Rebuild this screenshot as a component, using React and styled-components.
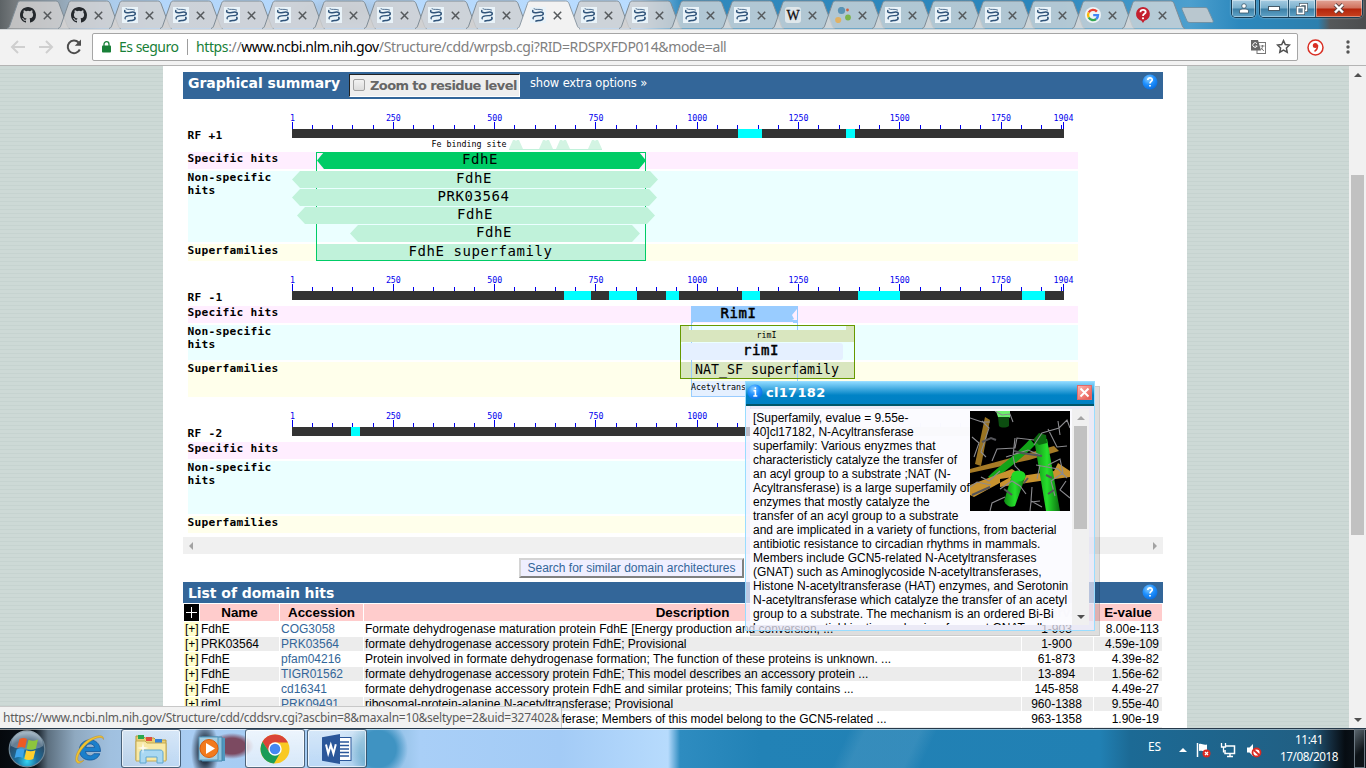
import React from "react";
import styled, { createGlobalStyle } from "styled-components";

const Global = createGlobalStyle`
  * { box-sizing: border-box; }
  html, body { margin: 0; padding: 0; }
  body { width: 1366px; height: 768px; overflow: hidden; font-family: "Liberation Sans", Arial, sans-serif; font-size: 12px; color: #000; }
  svg { display: block; }
`;

const UI = `"Noto Sans", "Open Sans", sans-serif`;
const VERDANA = `"DejaVu Sans", Verdana, sans-serif`;

const Desktop = styled.div`
  width: 1366px; height: 768px; display: flex; flex-direction: column; overflow: hidden;
`;

/* ---------- tab strip ---------- */
const TabStrip = styled.div`
  height: 29px; flex: none; position: relative; display: flex; padding-left: 7px;
  background:
    radial-gradient(ellipse 60px 16px at 345px 10px, rgba(120,130,140,.35), transparent),
    linear-gradient(90deg, #5d6366 0, #74797c 14px, #93a5b4 60px, #a9c8e6 100px, #b3d6fa 150px, #b9dcff 640px, #6fb0dc 662px, #3089bd 682px, #2a86bc 1030px, #4c9fce 1190px, #2c88bd 1240px, #2c7fae 1318px, #55585a 1330px, #4b4d4f 1366px);
`;
const TabBox = styled.div`
  width: ${p => (p.$narrow ? 50 : 51)}px; height: 29px; flex: none; position: relative; z-index: ${p => (p.$active ? 5 : 1)};
`;
const TabShape = styled.svg`position: absolute; left: 0; top: 0; overflow: visible;`;
const TabContent = styled.div`
  position: relative; display: flex; align-items: center; gap: 7px; padding: 7px 0 0 13px;
`;
const NewTab = styled.svg`margin: 7px 0 0 9px; flex: none; overflow: visible;`;
const WindowButtons = styled.div`
  position: absolute; right: 3px; top: 0; display: flex; align-items: flex-start; gap: 3px;
`;
const ButtonGroup = styled.div`
  display: flex; height: 18px; border: 1px solid #173b52; border-top: 0; border-radius: 0 0 5px 5px;
  box-shadow: inset 0 0 0 1px rgba(255,255,255,.55), 0 0 2px rgba(255,255,255,.6); overflow: hidden;
`;
const WinButton = styled.div`
  width: ${p => p.$w}px; height: 17px; display: flex; align-items: center; justify-content: center;
  border-left: ${p => (p.$sep ? "1px solid #24506b" : "0")};
  background: ${p => p.$red
    ? "linear-gradient(#e2a497 0,#d0705c 48%,#b3240c 52%,#c8421f 100%)"
    : "linear-gradient(#a5cce2 0,#78aecb 48%,#3d7fa5 52%,#5fa3c8 100%)"};
  box-shadow: inset 0 0 0 1px rgba(255,255,255,.4);
`;

const Ncbi = () => (
  <svg width="16" height="16" viewBox="0 0 16 16">
    <rect width="16" height="16" fill="#e9f3f9" />
    <g fill="none" stroke="#2f5379" strokeLinecap="round">
      <path d="M2.800 3.400C2 6 5 6 8 5.400s5.600-.4 5.200 1.400" strokeWidth="1.500" />
      <path d="M4 1.800C6 3.400 9 1.400 12.600 3" strokeWidth=".8" />
      <path d="M13.200 7.200C12.500 9.300 9 8.200 6.200 8.800S2.600 10.600 3.200 11.800" strokeWidth="1.300" />
      <path d="M12.800 10.400c.8 1.400-.4 2.400-2 2.800-1.600.4-3.200.2-4.800.8" strokeWidth="1.700" />
    </g>
  </svg>
);
const GitHub = () => (
  <svg width="16" height="16" viewBox="0 0 16 16">
    <path fill="#24282c" d="M8 0C3.580 0 0 3.580 0 8c0 3.540 2.290 6.530 5.470 7.590.4.070.55-.17.55-.38 0-.19-.01-.82-.01-1.490-2.010.37-2.530-.49-2.690-.94-.09-.23-.48-.94-.82-1.130-.28-.15-.68-.52-.01-.53.63-.01 1.080.58 1.230.82.72 1.210 1.870.87 2.330.66.070-.52.28-.87.51-1.070-1.780-.2-3.640-.89-3.640-3.950 0-.87.31-1.590.82-2.150-.08-.2-.36-1.020.08-2.120 0 0 .67-.21 2.200.82a7.600 7.600 0 0 1 4 0c1.530-1.040 2.200-.82 2.200-.82.44 1.100.16 1.920.08 2.120.51.56.82 1.270.82 2.150 0 3.070-1.870 3.750-3.650 3.950.29.25.54.73.54 1.480 0 1.070-.01 1.930-.01 2.200 0 .21.15.46.55.38A8.010 8.010 0 0 0 16 8c0-4.420-3.580-8-8-8z" />
  </svg>
);
const Wiki = () => (
  <svg width="16" height="16" viewBox="0 0 16 16">
    <rect width="16" height="16" rx="3" fill="#dfe7eb" />
    <text x="8" y="12.500" textAnchor="middle" fontFamily="Liberation Serif, serif" fontSize="14" fill="#111" stroke="#111" strokeWidth=".3">W</text>
  </svg>
);
const Dots = () => (
  <svg width="16" height="16" viewBox="0 0 16 16">
    <circle cx="6.500" cy="3.500" r="3.600" fill="#5a93b5" /><circle cx="12.500" cy="3" r="1.400" fill="#d1603f" />
    <circle cx="3.200" cy="13" r="3.100" fill="#dfb165" /><circle cx="13" cy="10.500" r="2.900" fill="#7db34a" />
  </svg>
);
const Google = () => (
  <svg width="16" height="16" viewBox="0 0 16 16">
    <circle cx="8" cy="8" r="8" fill="#f0f5f7" />
    <g fill="none" strokeWidth="2.400">
      <path d="M11.900 4.600A5 5 0 0 0 3.700 5.500" stroke="#ea4335" />
      <path d="M3.700 5.500a5 5 0 0 0 0 5" stroke="#fbbc05" />
      <path d="M3.700 10.500a5 5 0 0 0 7.500 1.500" stroke="#34a853" />
      <path d="M11.200 12A5 5 0 0 0 13 8.100H8.200" stroke="#4285f4" />
    </g>
  </svg>
);
const Question = () => (
  <svg width="16" height="16" viewBox="0 0 16 16">
    <path d="M8 0a7 7 0 0 1 1.500 13.800L8 16l-1.600-2.200A7 7 0 0 1 8 0z" fill="#c4202f" />
    <path d="M5.400 5.200C5.500 2 11 2.200 10.700 5.200 10.500 7 8 6.800 8 9" stroke="#fff" strokeWidth="1.800" fill="none" />
    <circle cx="8" cy="11.300" r="1.100" fill="#fff" />
  </svg>
);
const TAB_ICONS = [GitHub, GitHub, ...Array(13).fill(Ncbi), Wiki, Dots, Ncbi, Ncbi, Ncbi, Ncbi, Google, Question];

function Tab({ Icon, active, index }) {
  const right = index > 12;
  const fill = active ? "#f2f2f2" : right ? "rgba(214,217,218,.78)" : "rgba(210,209,209,.82)";
  return (
    <TabBox $active={active} $narrow={index > 14}>
      <TabShape width="64" height="29">
        <path d="M0 28.500C2 28 2.500 26.500 3 25L10.500 3.500C11 1.800 12 1 13.500 1H48.500C50.500 1 51.300 2 52 3.500L60 25C60.600 27 61 28 63 28.500" fill={fill} stroke={active ? "#8d9aa5" : "#7f8c96"} strokeWidth="1" />
        {active && <rect x="1" y="28" width="61" height="2" fill="#f2f2f2" />}
      </TabShape>
      <TabContent>
        <Icon />
        <svg width="9" height="9" viewBox="0 0 9 9"><path d="M.8.8l7.400 7.400M8.200.8L.8 8.200" stroke="#55595c" strokeWidth="1.500" /></svg>
      </TabContent>
    </TabBox>
  );
}

/* ---------- toolbar ---------- */
const Toolbar = styled.div`
  height: 37px; flex: none; background: #f2f2f2; border-bottom: 1px solid #b4b4b4;
  border-top: 1px solid #d5d8da; display: flex; align-items: center; padding: 0 13px 1px 10px; position: relative;
`;
const NavIcons = styled.div`display: flex; gap: 12px; width: 82px; align-items: center;`;
const Omnibox = styled.div`
  width: 1206px; height: 28px; background: #fff; border: 1px solid #a6a6a6; border-radius: 2px;
  display: flex; align-items: center; padding: 0 6px 1px 9px; font: 14px ${UI}; white-space: nowrap;
`;
const Secure = styled.span`color: #188038; margin-left: 8px; width: 59px; letter-spacing: -.5px;`;
const Divider = styled.span`width: 1px; height: 16px; background: #9d9d9d; margin: 0 8px 0 9px;`;
const Url = styled.span`flex: 1; color: #808080; letter-spacing: -.38px;`;
const UrlHost = styled.span`color: #000;`;
const UrlScheme = styled.span`color: #188038;`;
const OmniIcons = styled.div`display: flex; gap: 10px; align-items: center;`;
const ToolIcons = styled.div`display: flex; flex: 1; justify-content: space-between; align-items: center; padding: 0 3px 0 9px;`;

/* ---------- page ---------- */
const Viewport = styled.div`
  height: 662px; flex: none; position: relative; display: flex; overflow: hidden;
  background: repeating-linear-gradient(#cdd9d6 0 3px, #c6d3d0 3px 4px);
`;
const Page = styled.main`
  width: 1024px; height: 662px; margin-left: 163px; background: #fff; padding: 6px 24px 0 20px; flex: none; overflow: hidden;
`;
const PageScroll = styled.div`
  margin-left: 162px; width: 17px; height: 662px; background: #f1f1f1;
  display: flex; flex-direction: column; align-items: center; padding: 7px 0 6px;
`;
const PageThumb = styled.div`width: 13px; height: 360px; margin: 98px 0 auto; background: #c1c1c1;`;
const Arrow = styled.i`
  width: 0; height: 0; border: 4px solid transparent; flex: none;
  ${p => p.$dir === "up" && `border-top-width: 0; border-bottom-color: ${p.$c};`}
  ${p => p.$dir === "down" && `border-bottom-width: 0; border-top-color: ${p.$c};`}
  ${p => p.$dir === "left" && `border-left-width: 0; border-right-color: ${p.$c};`}
  ${p => p.$dir === "right" && `border-right-width: 0; border-left-color: ${p.$c};`}
`;
const SectionBar = styled.div`
  width: 980px; height: ${p => p.$h}px; background: #336699; color: #fff; display: flex; align-items: flex-start;
  padding: 2px 5px 0 5px;
`;
const SectionTitle = styled.h2`
  margin: 0; font: bold 14px/18px ${VERDANA}; width: 152px; white-space: nowrap; letter-spacing: -.06px;
`;
const ZoomBox = styled.label`
  width: 171px; height: 23px; margin-left: 9px; background: #eee; border: 1px solid #fff; border-top: 1px solid #222; border-left: 1px solid #222;
  display: flex; align-items: center; padding-left: 3px; gap: 5px; color: #666; font: bold 13px ${VERDANA}; white-space: nowrap; letter-spacing: -.6px;
`;
const Check = styled.span`
  width: 12px; height: 12px; flex: none; border: 1px solid #a2a2a2; border-radius: 2px; background: linear-gradient(#f2f2f2, #dcdcdc); margin-top: -2px;
`;
const Extra = styled.span`font: 11.500px/18px ${VERDANA}; margin-left: 10px; letter-spacing: -.15px;`;
const HelpSlot = styled.span`margin-left: auto;`;
const HScroll = styled.div`
  width: 980px; height: 17px; background: #f0f0f0; display: flex; align-items: center; justify-content: space-between; padding: 0 6px;
`;
const SearchRow = styled.div`height: 28px; display: flex; padding: 4px 0 0 336px;`;
const SearchButton = styled.button`
  width: 225px; height: 20px; padding: 0; border: 2px solid; border-color: #d4d4d4 #808080 #808080 #d4d4d4;
  background: #efefff; color: #336699; font: 12px "Liberation Sans", Arial, sans-serif; line-height: 15px; white-space: nowrap;
`;
const Grid = styled.div`
  display: grid; width: 980px; padding: 1px 1px 0; gap: 1px;
  grid-template-columns: 15px 79px 83px 657px 71px 68px;
`;
const Head = styled.div`
  height: 17px; background: #fcc; font-weight: bold; font-size: 13.400px; line-height: 17px; text-align: center; white-space: nowrap;
`;
const Plus = styled.div`
  height: 17px; background: #000; display: flex; align-items: center; justify-content: center;
`;
const Cell = styled.div`
  height: 14px; line-height: 15px; white-space: nowrap; padding: 0 3px 0 1px;
  background: ${p => (p.$exp ? "#ffc" : p.$alt ? "#ececec" : "#fff")};
  color: ${p => (p.$link ? "#336699" : "#000")};
  text-align: ${p => p.$align || "left"};
`;

const HelpIcon = () => (
  <svg width="16" height="16" viewBox="0 0 16 16">
    <defs><radialGradient id="hg" cx=".4" cy=".3" r=".7"><stop offset="0" stopColor="#8cd0ff" /><stop offset=".55" stopColor="#1e90ff" /><stop offset="1" stopColor="#0a6fe0" /></radialGradient></defs>
    <circle cx="8" cy="8" r="7.500" fill="url(#hg)" />
    <path d="M5.800 6C5.800 3.200 10.300 3.300 10.200 6 10.100 7.500 8 7.500 8 9.500M8 11v1.600" stroke="#fff" strokeWidth="1.700" fill="none" />
  </svg>
);

/* ---------- chart ---------- */
const TEXT_KINDS = {
  tiny: "font-size: 8.300px;",
  label: "font-size: 11.200px; font-weight: bold; letter-spacing: .257px;",
  big: "font-size: 14px; letter-spacing: .572px;",
  tall: "font-size: 13.300px;",
};
const ChartText = styled.text`
  font-family: "DejaVu Sans Mono", "Liberation Mono", monospace;
  ${p => TEXT_KINDS[p.$k]}
  ${p => p.$b && "stroke: #000; stroke-width: .5;"}
  fill: ${p => p.$c || "#000"};
  text-anchor: ${p => p.$a || "start"};
`;
const xOf = n => 292.500 + (n - 1) * 0.40515;

function Ruler({ y, name, gaps }) {
  const ticks = [];
  for (let n = 50; n <= 1900; n += 50) if (n % 250) ticks.push(n);
  const majors = [1, 250, 500, 750, 1000, 1250, 1500, 1750, 1904];
  return (
    <g>
      {ticks.map(n => <rect key={n} x={Math.round(xOf(n) - .5)} y={y - 4} width="1" height="4" fill="#0000ee" />)}
      {majors.map(n => (
        <g key={n}>
          <rect x={Math.round(xOf(n) - .5)} y={y - 7} width="1" height="7" fill="#0000ee" />
          <ChartText $k="tiny" $a="middle" $c="#0000ee" x={xOf(n)} y={y - 8}>{n}</ChartText>
        </g>
      ))}
      <rect x="292" y={y} width="772" height="9" fill="#333" />
      {gaps.map(([a, b]) => <rect key={a} x={a} y={y} width={b - a} height="9" fill="#0ff" />)}
      <ChartText $k="label" x="187.500" y={y + 10}>{name}</ChartText>
    </g>
  );
}
function Bands({ rows }) {
  return rows.map(([fill, y, h, labels]) => (
    <g key={y}>
      <rect x="188" y={y} width="890" height={h} fill={fill} />
      {labels.map((t, i) => <ChartText key={t} $k="label" x="187.500" y={y + 10 + i * 13}>{t}</ChartText>)}
    </g>
  ));
}
const Bar = ({ x1, x2, y, fill, label, tx, cut = 8 }) => (
  <g>
    <path d={`M${x1} ${y + 8.500}L${x1 + cut} ${y}H${x2 - cut}L${x2} ${y + 8.500}L${x2 - cut} ${y + 17}H${x1 + cut}Z`} fill={fill} />
    <ChartText $k="big" $a="middle" x={tx} y={y + 12}>{label}</ChartText>
  </g>
);
const PINK = "#ffeeff", CYAN = "#ebffff", YEL = "#ffffeb", MINT = "#c0f2da";

const Frame1 = () => (
  <svg width="980" height="169" viewBox="183 99 980 169">
    <Ruler y={129} name="RF +1" gaps={[[738, 762], [846, 855]]} />
    <Bands rows={[[PINK, 152, 17, ["Specific hits"]], [CYAN, 171, 71, ["Non-specific", "hits"]], [YEL, 244, 17, ["Superfamilies"]]]} />
    <ChartText $k="tiny" x="431.500" y="147">Fe binding site</ChartText>
    {[516, 546, 563, 595].map(c => <path key={c} d={`M${c - 7} 149L${c - 3} 140h2l1 1 1-1h2L${c + 7} 149z`} fill="#d3f4e3" />)}
    <rect x="509" y="149" width="93" height="1" fill={MINT} />
    <rect x="317" y="244" width="328" height="16" fill={MINT} />
    <rect x="316.500" y="152.500" width="329" height="108" fill="none" stroke="#00cc66" />
    <Bar x1={317} x2={646} y={152} fill="#00cc66" label="FdhE" tx={480} cut={7} />
    <Bar x1={292} x2={658} y={171} fill={MINT} label="FdhE" tx={474} />
    <Bar x1={292} x2={657} y={189} fill={MINT} label="PRK03564" tx={473.500} />
    <Bar x1={297} x2={655} y={207} fill={MINT} label="FdhE" tx={475} />
    <Bar x1={350} x2={640} y={225} fill={MINT} label="FdhE" tx={494} />
    <ChartText $k="big" $a="middle" x="480.500" y="256">FdhE superfamily</ChartText>
  </svg>
);
const Frame2 = () => (
  <svg width="980" height="136" viewBox="183 268 980 136">
    <Ruler y={291} name="RF -1" gaps={[[564, 591], [609, 637], [666, 679], [742, 760], [858, 900], [1022, 1045]]} />
    <Bands rows={[[PINK, 306, 17, ["Specific hits"]], [CYAN, 325, 35, ["Non-specific", "hits"]], [YEL, 362, 35, ["Superfamilies"]]]} />
    <rect x="691" y="306" width="107" height="17" fill="#99ccff" />
    <path d="M797 309l-5 6 2 4-2 1h5zM693 323v-1h100v1z" fill={PINK} />
    <ChartText $k="big" $b x="720.500" y="318">RimI</ChartText>
    <rect x="681" y="325" width="174" height="17" fill="#d9e6bf" />
    <rect x="689" y="326" width="157" height="4" fill={CYAN} />
    <ChartText $k="tiny" x="756.500" y="338">rimI</ChartText>
    <rect x="681" y="343" width="162" height="17" rx="3" fill="#e5f0ff" />
    <ChartText $k="big" $b x="743" y="355">rimI</ChartText>
    <rect x="681" y="362" width="174" height="16" fill="#d9e6bf" />
    <rect x="691" y="381" width="107" height="15" fill="#e5f0ff" />
    <path d="M691.500 323v7M691.500 342v1M691.500 360v37M797.500 323v7M797.500 360v37M691 396.500h107" stroke="#99ccff" fill="none" />
    <rect x="680.500" y="325.500" width="174" height="53" fill="none" stroke="#669900" />
    <ChartText $k="tall" x="695" y="374">NAT_SF superfamily</ChartText>
    <ChartText $k="tiny" x="691" y="390">Acetyltransf</ChartText>
  </svg>
);
const Frame3 = () => (
  <svg width="980" height="133" viewBox="183 404 980 133">
    <Ruler y={427} name="RF -2" gaps={[[351, 360]]} />
    <Bands rows={[[PINK, 442, 17, ["Specific hits"]], [CYAN, 461, 53, ["Non-specific", "hits"]], [YEL, 516, 17, ["Superfamilies"]]]} />
  </svg>
);

const HITS = [
  ["FdhE", "COG3058", "Formate dehydrogenase maturation protein FdhE [Energy production and conversion, ...", "1-903", "8.00e-113"],
  ["PRK03564", "PRK03564", "formate dehydrogenase accessory protein FdhE; Provisional", "1-900", "4.59e-109"],
  ["FdhE", "pfam04216", "Protein involved in formate dehydrogenase formation; The function of these proteins is unknown. ...", "61-873", "4.39e-82"],
  ["FdhE", "TIGR01562", "formate dehydrogenase accessory protein FdhE; This model describes an accessory protein ...", "13-894", "1.56e-62"],
  ["FdhE", "cd16341", "formate dehydrogenase accessory protein FdhE and similar proteins; This family contains ...", "145-858", "4.49e-27"],
  ["rimI", "PRK09491", "ribosomal-protein-alanine N-acetyltransferase; Provisional", "960-1388", "9.55e-40"],
  ["RimI", "TIGR01575", "ribosomal-protein-alanine acetyltransferase; Members of this model belong to the GCN5-related ...", "963-1358", "1.90e-19"],
  ["", "", "", "", ""],
];

/* ---------- popup ---------- */
const PopupShadow = styled.div`
  position: absolute; left: 750px; top: 320px; width: 350px; height: 250px; background: rgba(0,0,0,.13); border: 1px solid rgba(0,0,0,.08);
`;
const Popup = styled.section`
  position: absolute; left: 745px; top: 315px; width: 350px; height: 250px; border: 1px solid #99ddff; background: rgba(240,238,255,.72);
  display: flex; flex-direction: column;
`;
const PopupTitle = styled.header`
  height: 24px; flex: none; background: linear-gradient(#8ad8ff 0, #3aa6dd 35%, #0083c6 60%, #0080c4 100%); border-bottom: 2px solid #00566a;
  display: flex; align-items: center; padding: 0 2px 2px 1px; color: #fff; font: bold 13px ${VERDANA};
`;
const TitleText = styled.span`flex: 1; margin-left: 3px; letter-spacing: .3px;`;
const CloseBox = styled.span`
  width: 15px; height: 15px; border: 1px solid #e06a6a; background: linear-gradient(135deg, #ffb5ad, #e5554d); display: flex; align-items: center; justify-content: center;
`;
const PopupBody = styled.div`
  margin: 3px 5px 0 4px; height: 216px; background: rgba(252,252,255,.95); display: flex; overflow: hidden;
`;
const PopupText = styled.div`
  flex: 1; padding: 2px 0 0 3px; line-height: 14px; white-space: nowrap; overflow: hidden;
`;
const Line = styled.div`height: 14px;`;
const Molecule = styled.svg`float: right; margin: 0 2px 0 -6px;`;
const PopupScroll = styled.div`
  width: 17px; height: 216px; background: #f0f0f0; display: flex; flex-direction: column; align-items: center; padding: 7px 0 6px;
`;
const PopupThumb = styled.div`width: 13px; height: 103px; background: #c1c1c1; margin: 6px 0 auto;`;
const LINES = [
  "[Superfamily, evalue = 9.55e-", "40]cl17182, N-Acyltransferase", "superfamily: Various enyzmes that", "characteristicly catalyze the transfer of",
  "an acyl group to a substrate ;NAT (N-", "Acyltransferase) is a large superfamily of", "enzymes that mostly catalyze the", "transfer of an acyl group to a substrate",
  "and are implicated in a variety of functions, from bacterial", "antibiotic resistance to circadian rhythms in mammals.",
  "Members include GCN5-related N-Acetyltransferases", "(GNAT) such as Aminoglycoside N-acetyltransferases,",
  "Histone N-acetyltransferase (HAT) enzymes, and Serotonin", "N-acetyltransferase which catalyze the transfer of an acetyl",
  "group to a substrate. The mechanism is an ordered Bi-Bi", "base, sequential kinetic mechanism for most GNAT, all",
];
const MoleculeArt = () => (
  <Molecule width="100" height="100" viewBox="0 0 100 100">
    <defs>
      <linearGradient id="cylA"><stop offset="0" stopColor="#0f8a14" /><stop offset=".5" stopColor="#26e02c" /><stop offset="1" stopColor="#0c6d10" /></linearGradient>
    </defs>
    <rect width="100" height="100" fill="#000" />
    <path d="M15 6l5 3-9 46-6-2z" fill="#9a7422" />
    <path d="M0 58l52-14 32-9 5 5-30 9L0 62z" fill="#a67b26" />
    <path d="M18 66c14-14 24-18 42-38l5 6C50 50 38 56 24 70z" fill="#12a418" />
    <path d="M0 74l42-16 6 4L4 86l-4-2zM30 76l40-6 30-4v-6l-12-8-4 8-54 8z" fill="#c8932f" />
    <path d="M26 0h14v6c-3 4-9 4-12 0z" fill="#6cf06c" /><path d="M28 6h11v9c-3 2-8 2-10 0z" fill="#0c4d10" />
    <path d="M64 28h13L90 100H76z" fill="url(#cylA)" />
    <path d="M63 29l6-7 7 2 1 8-8 2z" fill="#0b6a10" />
    <path d="M42 64h14L45 95c-4 2-9 0-11-5z" fill="url(#cylA)" />
    <ellipse cx="48.500" cy="65" rx="7" ry="5.500" fill="#1fd826" />
    <g fill="none" stroke="#8b8b8f" strokeWidth="1.100">
      <path d="M0 7l12 4 8 0M2 26l7 6-5 14M12 10l7 7-8 24 5 5M22 50l5-12 18-1 2-10 17 2M25 0l7 4 8-1 3 8M45 27l-2 18 2 10 5 5M64 34l8-12 17-5 8-8 3 8M78 18l9 18 10-1M88 10l2 14M66 54l22 4 9 9M70 54l-3 14M20 100l2-8 13-6M60 100l1-9 9-1M78 54l12-6 3 14-12 8 4 15M30 60l-11 10-8-4M30 78l12-8 8 5 6 8M62 76l-1 14 11 6M0 76l7-5 14 3M96 70l-6 9 10 8M36 46l22-7 12 5" />
    </g>
    <path d="M12 31l9-4 5 2M44 40l8 2 20 3M76 64l6 3M78 83l6-4M34 78l8 6M2 84l18-8M54 72l4-5" stroke="#55555a" strokeWidth="2" fill="none" />
  </Molecule>
);
const InfoIcon = () => (
  <svg width="16" height="16" viewBox="0 0 16 16">
    <circle cx="8" cy="8" r="7.500" fill="url(#hg)" />
    <path d="M8.300 3.200v2M6.500 6.700h1.900v5.100M6.300 12h4" stroke="#fff" strokeWidth="1.600" fill="none" />
  </svg>
);

const StatusBubble = styled.div`
  position: absolute; left: 0; bottom: 0; width: 562px; height: 22px; background: #f2f2f2; border: 1px solid #c8c8c8; border-left: 0; border-bottom: 0; border-radius: 0 3px 0 0;
  color: #5c5c5c; font: 12px/21px ${UI}; padding-left: 3px; white-space: nowrap; letter-spacing: -.26px; overflow: hidden;
`;

/* ---------- taskbar ---------- */
const Taskbar = styled.footer`
  height: 40px; flex: none; display: flex; align-items: stretch; border-top: 1px solid #26394a; position: relative; overflow: hidden;
  box-shadow: inset 0 1px 0 rgba(255,255,255,.5);
  background:
    radial-gradient(ellipse 30px 30px at 378px 20px, #3f93c2 0 60%, transparent),
    radial-gradient(ellipse 14px 30px at 205px 22px, #28374a 0 40%, transparent),
    radial-gradient(ellipse 22px 13px at 232px 17px, #7c4a61 0 60%, transparent),
    linear-gradient(115deg, transparent 0 770px, rgba(255,255,255,.09) 785px 835px, transparent 850px),
    linear-gradient(90deg, #05090d 0, #0a1219 35px, #5d7080 48px, #8fa9c0 75px, #a0c0df 110px, #a9cdf3 190px, #a3cbf3 340px, #7fb6dd 372px, #a0c9ef 410px, #a9cff7 420px, #a3cbf6 560px, #b7dbfd 668px, #2e8cc0 680px, #2282b6 760px, #2180b3 1100px, #1c6a95 1130px, #215f83 1310px, #13293a 1332px, #060c12 1345px, #101820 1366px);
`;
const StartSlot = styled.div`width: 53px; margin-right: 6px; display: flex; align-items: center; justify-content: center;`;
const TaskItem = styled.div`
  width: 60px; height: 39px; margin-right: 2px; display: flex; align-items: center; justify-content: center; padding-top: 1px;
  border: ${p => (p.$open ? "1px solid rgba(30,55,80,.75)" : "1px solid transparent")}; border-radius: 3px;
  background: ${p => (p.$open ? `linear-gradient(rgba(255,255,255,${p.$hot ? .8 : .55}), rgba(255,255,255,${p.$hot ? .55 : .25}))` : "none")};
  box-shadow: ${p => (p.$open ? "inset 0 0 0 1px rgba(255,255,255,.65)" : "none")};
`;
const Tray = styled.div`margin-left: auto; display: flex; align-items: center; color: #fff; font: 12px ${UI};`;
const Lang = styled.span`font-size: 12px; width: 15px; margin: -5px 16px 0 0; letter-spacing: -.2px;`;
const TrayIcons = styled.div`display: flex; gap: 7px; align-items: center; margin: 2px 17px 0 0;`;
const Clock = styled.div`
  width: 60px; font-size: 11.700px; line-height: 17px; text-align: center; margin: -1px 15px 0 0; letter-spacing: -.4px; white-space: nowrap;
`;
const ShowDesktop = styled.div`width: 11px; align-self: stretch; border: 1px solid #6b7882; background: linear-gradient(135deg, #59646c, #0d1318 60%); margin-right: 1px;`;

const StartOrb = () => (
  <svg width="38" height="38" viewBox="0 0 38 38">
    <defs><radialGradient id="orb" cx=".5" cy=".85" r=".8"><stop offset="0" stopColor="#34d5f5" /><stop offset=".35" stopColor="#1d6f9d" /><stop offset=".75" stopColor="#2a4c68" /><stop offset="1" stopColor="#7d98ac" /></radialGradient></defs>
    <circle cx="19" cy="19" r="17.800" fill="url(#orb)" stroke="#6f8797" strokeWidth="1.200" />
    <path d="M3 16a16 16 0 0 1 32 0c-8 5-22 5-32 0z" fill="#fff" opacity=".28" />
    <path d="M11.500 9c3-1.500 5.500-1 7.500 0l-2 9c-2-1.300-5-1.500-8 0z" fill="#ee5a24" />
    <path d="M20.500 9.700c3 1.500 5.500 1.600 9.500-.2l-2.200 9.200c-3 1.500-6.300 1.500-9.300 0z" fill="#8cc63e" />
    <path d="M8.600 19.600c3-1.500 5.500-1.300 8 0l-2 8.400c-2-1.200-5-1.200-8 0z" fill="#3da4ea" />
    <path d="M18.200 20.200c3 1.500 6 1.500 9.300 0l-2.200 8.800c-3 1.400-6.300 1.200-9 0z" fill="#ffd02e" />
  </svg>
);
const IE = () => (
  <svg width="32" height="32" viewBox="0 0 32 32">
    <path d="M27.500 18.500H12.500c.4 4.600 6.500 5.600 8.300 2.200h6C24 30 6.500 29.500 6.300 17 6.500 4 27.500 2.500 27.500 18.500zM12.700 14.400h8.800c-.4-4.600-8.100-4.700-8.800 0z" fill="#1b7fca" stroke="#0c4f94" strokeWidth=".7" />
    <path d="M4.500 30C-1 27 6 11 17.500 5.500 24 2.300 31 1 30.500 6.500 30 3.500 24 3.500 17 8.500 8 15 2.500 25.500 5.500 28c1.200.8 3.500.3 5.500-.8C9 29.200 6.500 30.800 4.500 30z" fill="#f0c331" stroke="#b5841a" strokeWidth=".4" />
  </svg>
);
const Explorer = () => (
  <svg width="34" height="32" viewBox="0 0 34 32">
    <path d="M2 3h7l2 2h9l2 2h10v20H2z" fill="#e8cf73" stroke="#b89a3d" />
    <path d="M4 2h6v4H4z" fill="#2aa94f" /><path d="M12 4h6v4h-6z" fill="#e04c3c" /><path d="M21 6h7v4h-7z" fill="#3783d6" />
    <path d="M2 8h9l2 2h19v18H2z" fill="#f8e9a6" stroke="#c6ab52" />
    <path d="M6 30V20c0-2 1-3 3-3h17c2 0 3 1 3 3v10h-6v-6H12v6z" fill="#a9d8f2" stroke="#5fa6cf" />
    <path d="M9 9l1 5 5 1-5 1-1 5-1-5-5-1 5-1z" fill="#fff" opacity=".8" />
  </svg>
);
const Media = () => (
  <svg width="30" height="28" viewBox="0 0 30 28">
    <path d="M6 3h21v23H6z" fill="#4f97be" /><path d="M4 2h20v24H4z" fill="#8dc3de" stroke="#4486ad" /><path d="M1 2h19v23H1z" fill="#a7cfe2" stroke="#5597ba" />
    <circle cx="11" cy="13.500" r="9" fill="#f27a1d" stroke="#d95c0b" /><path d="M8 8l9 5.500L8 19z" fill="#fff" />
  </svg>
);
const Chrome = () => (
  <svg width="30" height="30" viewBox="0 0 30 30">
    <circle cx="15" cy="15" r="14.500" fill="#f9c922" />
    <path d="M15 .5A14.500 14.500 0 0 0 2.500 7.700L9 18l6-9.500h12.900A14.500 14.500 0 0 0 15 .5z" fill="#da4437" />
    <path d="M2.500 7.700A14.500 14.500 0 0 0 14 29.500L20.600 18.300 9.200 18z" fill="#1a9c57" />
    <circle cx="15" cy="15" r="6.700" fill="#fff" /><circle cx="15" cy="15" r="5.300" fill="#4587f3" />
  </svg>
);
const Word = () => (
  <svg width="30" height="30" viewBox="0 0 30 30">
    <rect x="16" y="3.500" width="13" height="23" fill="#fff" stroke="#2b579a" />
    <path d="M18 8h9M18 11.500h9M18 15h9M18 18.500h9M18 22h9" stroke="#2b579a" strokeWidth="1.500" />
    <path d="M0 3.200L18 0v30L0 26.800z" fill="#2b579a" />
    <path d="M4 10.500l2.200 9 2.600-8.500 2.600 8.500 2.400-9.300" stroke="#fff" strokeWidth="2" fill="none" />
  </svg>
);

export default function App() {
  return (
    <Desktop>
      <Global />
      <TabStrip>
        {TAB_ICONS.map((Icon, i) => <Tab key={i} Icon={Icon} index={i} active={i === 10} />)}
        <NewTab width="34" height="16"><path d="M1 2.500C.5 1 1.500.5 2.500.5H24c1.500 0 2.500.7 3 2l5 11c.5 1.500 0 2-1.500 2H9c-1.600 0-2.600-.7-3.200-2z" fill="#b9c7cf" stroke="#7292a5" /></NewTab>
        <WindowButtons>
          <ButtonGroup><WinButton $w={23}>
            <svg width="10" height="11" viewBox="0 0 10 11"><circle cx="5" cy="3" r="2.300" fill="#fff" stroke="#35566a" strokeWidth=".8" /><path d="M.5 10V8c0-1.500 1.500-2 4.500-2s4.500.5 4.500 2v2z" fill="#fff" stroke="#35566a" strokeWidth=".8" /></svg>
          </WinButton></ButtonGroup>
          <ButtonGroup>
            <WinButton $w={28}><svg width="12" height="5"><rect x=".5" y=".5" width="11" height="4" fill="#fff" stroke="#465a68" /></svg></WinButton>
            <WinButton $w={27} $sep><svg width="12" height="12"><path d="M4.500 1.500h6v6h-6z" fill="none" stroke="#465a68" strokeWidth="3" /><path d="M4.500 1.500h6v6h-6z" fill="none" stroke="#fff" strokeWidth="1.500" /><rect x="1.500" y="4.500" width="6" height="6" fill="#668" stroke="#465a68" strokeWidth="3" /><rect x="1.500" y="4.500" width="6" height="6" fill="#5e8299" stroke="#fff" strokeWidth="1.600" /></svg></WinButton>
            <WinButton $w={47} $sep $red><svg width="12" height="11" viewBox="0 0 12 11"><path d="M2 1.500l8 8M10 1.500l-8 8" stroke="#5b4444" strokeWidth="4" /><path d="M2 1.500l8 8M10 1.500l-8 8" stroke="#fff" strokeWidth="2.400" /></svg></WinButton>
          </ButtonGroup>
        </WindowButtons>
      </TabStrip>

      <Toolbar>
        <NavIcons>
          <svg width="16" height="16" viewBox="0 0 16 16"><path d="M15 8H2.500M8 2L2 8l6 6" stroke="#cfcfcf" strokeWidth="2" fill="none" /></svg>
          <svg width="16" height="16" viewBox="0 0 16 16"><path d="M1 8h12.500M8 2l6 6-6 6" stroke="#cfcfcf" strokeWidth="2" fill="none" /></svg>
          <svg width="16" height="16" viewBox="0 0 16 16"><path d="M13.800 10.500A6.300 6.300 0 1 1 12.600 3.500" stroke="#4d4d4d" strokeWidth="2" fill="none" /><path d="M15 .5v6.200H8.800z" fill="#4d4d4d" /></svg>
        </NavIcons>
        <Omnibox>
          <svg width="9" height="12" viewBox="0 0 9 12"><rect y="4.500" width="9" height="7" rx=".8" fill="#188038" /><path d="M2 5V3.200a2.500 2.500 0 0 1 5 0V5" stroke="#188038" strokeWidth="1.300" fill="none" /></svg>
          <Secure>Es seguro</Secure><Divider />
          <Url><UrlScheme>https</UrlScheme>://<UrlHost>www.ncbi.nlm.nih.gov</UrlHost>/Structure/cdd/wrpsb.cgi?RID=RDSPXFDP014&amp;mode=all</Url>
          <OmniIcons>
            <svg width="15" height="14" viewBox="0 0 15 14"><rect x="6" y="2.500" width="8.500" height="11" fill="#fff" stroke="#777" /><path d="M0 0h7l3 10.500H0z" fill="#666" /><path d="M6 3.700A2.300 2.300 0 1 0 6.200 6H4.300" stroke="#fff" fill="none" /><path d="M9.500 6h4M11.500 5v1c0 2-1 3-2 4M10.300 8l2.500 3" stroke="#777" fill="none" /></svg>
            <svg width="15" height="15" viewBox="0 0 15 15"><path d="M7.500 1.600l1.800 3.900 4.200.5-3.100 2.900.8 4.300-3.700-2.100-3.700 2.100.8-4.300L1.500 6l4.200-.5z" fill="none" stroke="#505050" strokeWidth="1.500" /></svg>
          </OmniIcons>
        </Omnibox>
        <ToolIcons>
          <svg width="17" height="17" viewBox="0 0 17 17"><circle cx="8.500" cy="8.500" r="7.500" fill="#fff" stroke="#d93025" strokeWidth="1.500" /><circle cx="8.300" cy="6.500" r="2.500" fill="#d93025" /><path d="M10.500 6c.3 3-.8 5-3 6.300" stroke="#d93025" strokeWidth="1.500" fill="none" /></svg>
          <svg width="4" height="14"><circle cx="2" cy="2" r="1.700" fill="#555" /><circle cx="2" cy="7" r="1.700" fill="#555" /><circle cx="2" cy="12" r="1.700" fill="#555" /></svg>
        </ToolIcons>
      </Toolbar>

      <Viewport>
        <Page>
          <SectionBar $h={27}>
            <SectionTitle>Graphical summary</SectionTitle>
            <ZoomBox><Check />Zoom to residue level</ZoomBox>
            <Extra>show extra options »</Extra>
            <HelpSlot><HelpIcon /></HelpSlot>
          </SectionBar>
          <Frame1 /><Frame2 /><Frame3 />
          <HScroll><Arrow $dir="left" $c="#a3a3a3" /><Arrow $dir="right" $c="#a3a3a3" /></HScroll>
          <SearchRow><SearchButton>Search for similar domain architectures</SearchButton></SearchRow>
          <SectionBar $h={21}>
            <SectionTitle>List of domain hits</SectionTitle>
            <HelpSlot><HelpIcon /></HelpSlot>
          </SectionBar>
          <Grid>
            <Plus><svg width="11" height="11"><path d="M5.500 0v11M0 5.500h11" stroke="#fff" /></svg></Plus>
            <Head>Name</Head><Head>Accession</Head><Head>Description</Head><Head>Interval</Head><Head>E-value</Head>
            {HITS.map(([n, a, d, iv, e], i) => {
              const alt = i % 2 === 1;
              return (
                <React.Fragment key={i}>
                  <Cell $exp>{n && "[+]"}</Cell>
                  <Cell $alt={alt}>{n}</Cell>
                  <Cell $alt={alt} $link>{a}</Cell>
                  <Cell $alt={alt}>{d}</Cell>
                  <Cell $alt={alt} $align="center">{iv}</Cell>
                  <Cell $alt={alt} $align="right">{e}</Cell>
                </React.Fragment>
              );
            })}
          </Grid>
        </Page>
        <PageScroll>
          <Arrow $dir="up" $c="#505050" />
          <PageThumb />
          <Arrow $dir="down" $c="#505050" />
        </PageScroll>
        <PopupShadow />
        <Popup>
          <PopupTitle><InfoIcon /><TitleText>cl17182</TitleText><CloseBox><svg width="11" height="11"><path d="M1.500 1.500l8 8M9.500 1.500l-8 8" stroke="#fff" strokeWidth="2" /></svg></CloseBox></PopupTitle>
          <PopupBody>
            <PopupText><MoleculeArt />{LINES.map(t => <Line key={t}>{t}</Line>)}</PopupText>
            <PopupScroll><Arrow $dir="up" $c="#a3a3a3" /><PopupThumb /><Arrow $dir="down" $c="#505050" /></PopupScroll>
          </PopupBody>
        </Popup>
        <StatusBubble>https://www.ncbi.nlm.nih.gov/Structure/cdd/cddsrv.cgi?ascbin=8&amp;maxaln=10&amp;seltype=2&amp;uid=327402&amp;</StatusBubble>
      </Viewport>

      <Taskbar>
        <StartSlot><StartOrb /></StartSlot>
        <TaskItem><IE /></TaskItem>
        <TaskItem $open><Explorer /></TaskItem>
        <TaskItem><Media /></TaskItem>
        <TaskItem $open $hot><Chrome /></TaskItem>
        <TaskItem $open><Word /></TaskItem>
        <Tray>
          <Lang>ES</Lang>
          <TrayIcons>
            <Arrow $dir="up" $c="#fff" />
            <svg width="18" height="16" viewBox="0 0 18 16"><path d="M3.500 1v14" stroke="#fff" strokeWidth="1.500" /><path d="M5 2c3-1 4 1.500 8 .5V9c-4 1-5-1-8 0z" fill="#fff" /><circle cx="12.500" cy="11.500" r="4" fill="#d92a22" /><path d="M11 10l3 3M14 10l-3 3" stroke="#fff" strokeWidth="1.300" /></svg>
            <svg width="18" height="16" viewBox="0 0 18 16"><path d="M7 4h8.500v7.500H6V8M8 14.500h6M11 11.500v3" stroke="#fff" strokeWidth="1.500" fill="none" /><path d="M2.500 1v4h4V1M4.500 5v5.500" stroke="#fff" strokeWidth="1.300" fill="none" /></svg>
            <svg width="18" height="16" viewBox="0 0 18 16"><path d="M3 5.500h2.500L9 2v12L5.500 10.500H3z" fill="#fff" /><circle cx="12.500" cy="10.500" r="4" fill="#fff" stroke="#d92a22" strokeWidth="1.800" /><path d="M9.800 8l5.400 5" stroke="#d92a22" strokeWidth="1.800" /></svg>
          </TrayIcons>
          <Clock>11:41<br />17/08/2018</Clock>
          <ShowDesktop />
        </Tray>
      </Taskbar>
    </Desktop>
  );
}
